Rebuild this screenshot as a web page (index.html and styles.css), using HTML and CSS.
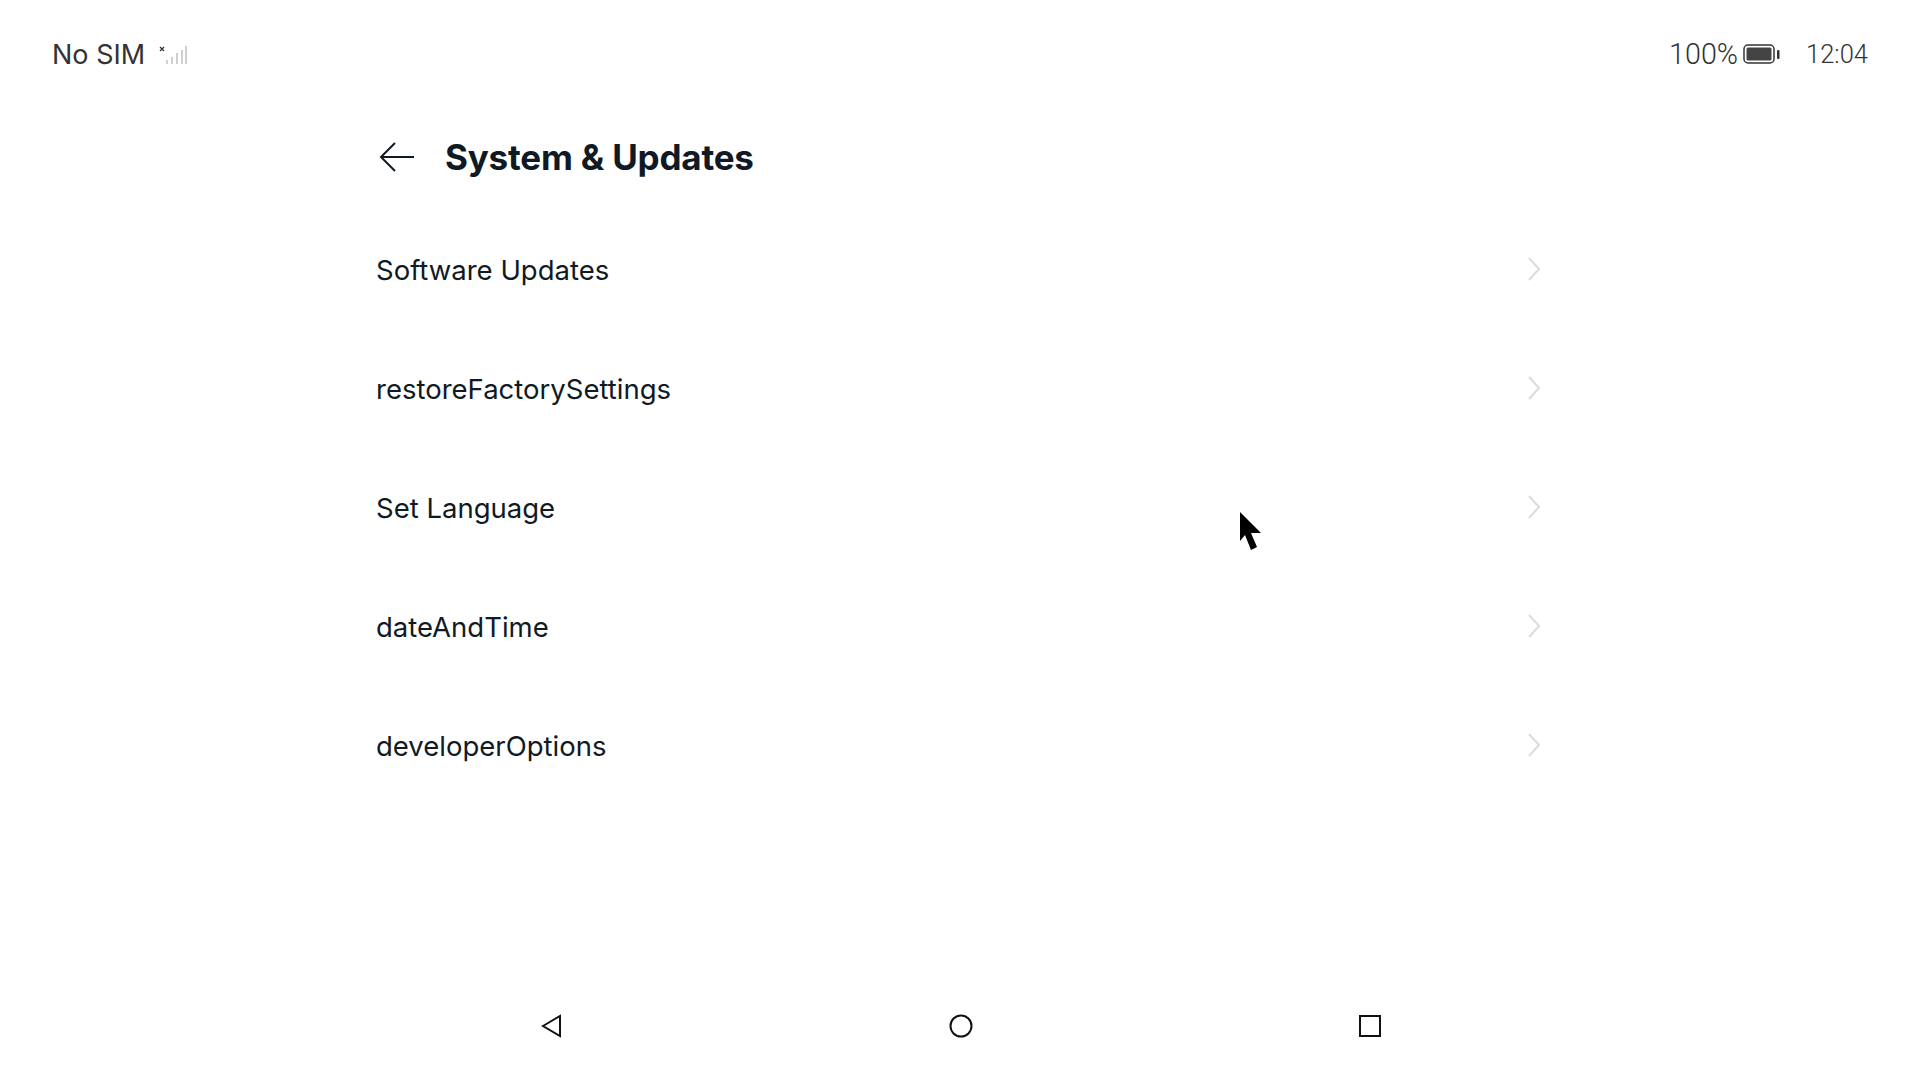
FILE: index.html
```html
<!DOCTYPE html>
<html lang="en">
  <head>
    <meta charset="UTF-8" />
    <title>System &amp; Updates</title>
    <link rel="stylesheet" href="styles.css">
  </head>
  <body>
    <div class="screen">
      <div class="statusBar">
        <div class="statusLeft">
          <span class="noSim">No SIM</span>
          <svg class="signal" width="28" height="20" viewBox="0 0 28 20">
            <path d="M1 3l4 4M5 3l-4 4" stroke="#333" stroke-width="1.3" fill="none" />
            <path d="M8 20v-4M13 20v-7M18 20v-11M23 20v-14M27 20v-18" stroke="#cfcfcf" stroke-width="2" fill="none" />
          </svg>
        </div>
        <div class="statusRight">
          <span class="battery">100%</span>
          <svg class="batteryIcon" width="37" height="20" viewBox="0 0 37 20">
            <rect x="1" y="1" width="30" height="18" rx="4" fill="none" stroke="#333" stroke-width="1.5" />
            <rect x="3.5" y="3.5" width="25" height="13" rx="1.5" fill="#444" />
            <rect x="34" y="6" width="2.5" height="9" rx="1" fill="#333" />
          </svg>
          <span class="clock">12:04</span>
        </div>
      </div>

      <div class="content">
        <div class="header">
          <svg class="backArrow" width="36" height="32" viewBox="0 0 36 32">
            <path d="M35 16H2M16 2L2 16l14 14" fill="none" stroke="#101a24" stroke-width="2" />
          </svg>
          <h1 class="title">System &amp; Updates</h1>
        </div>

        <ul class="menu">
          <li class="menuItem">
            <span class="menuLabel">Software Updates</span>
            <svg class="chevron" width="12" height="24" viewBox="0 0 12 24"><path d="M1 1l10 11L1 23" /></svg>
          </li>
          <li class="menuItem">
            <span class="menuLabel">restoreFactorySettings</span>
            <svg class="chevron" width="12" height="24" viewBox="0 0 12 24"><path d="M1 1l10 11L1 23" /></svg>
          </li>
          <li class="menuItem">
            <span class="menuLabel">Set Language</span>
            <svg class="chevron" width="12" height="24" viewBox="0 0 12 24"><path d="M1 1l10 11L1 23" /></svg>
          </li>
          <li class="menuItem">
            <span class="menuLabel">dateAndTime</span>
            <svg class="chevron" width="12" height="24" viewBox="0 0 12 24"><path d="M1 1l10 11L1 23" /></svg>
          </li>
          <li class="menuItem">
            <span class="menuLabel">developerOptions</span>
            <svg class="chevron" width="12" height="24" viewBox="0 0 12 24"><path d="M1 1l10 11L1 23" /></svg>
          </li>
        </ul>
      </div>

      <div class="navBar">
        <svg width="22" height="24" viewBox="0 0 22 24"><path d="M2 12L19 2v20z" /></svg>
        <svg width="24" height="24" viewBox="0 0 24 24"><circle cx="12" cy="12" r="10.5" /></svg>
        <svg width="24" height="24" viewBox="0 0 24 24"><rect x="2" y="2" width="20" height="20" /></svg>
      </div>

      <!-- mouse pointer -->
      <svg class="cursor" width="24" height="40" viewBox="0 0 24 40">
        <path d="M1 0L22 21H12L18 35L12 38L6 23L1 29Z" fill="#000" />
      </svg>
    </div>
  </body>
</html>
```

FILE: styles.css
```css
* {
  margin: 0;
  padding: 0;
  box-sizing: border-box;
}

body {
  background: #fff;
  font-family: "Inter", "Liberation Sans", sans-serif;
}

.screen {
  position: relative;
  width: 1920px;
  height: 1080px;
  overflow: hidden;
  display: flex;
  flex-direction: column;
}

.statusBar {
  height: 108px;
  padding: 0 52px;
  display: flex;
  justify-content: space-between;
  align-items: center;
  color: #333;
}

.statusLeft,
.statusRight {
  display: flex;
  align-items: center;
}

.noSim {
  font-size: 27px;
}

.signal {
  margin-left: 14px;
  margin-bottom: 1px;
}

.battery,
.clock {
  font-family: "Roboto", sans-serif;
  font-weight: 300;
}

.battery {
  font-size: 28.7px;
}

.batteryIcon {
  margin-left: 5px;
}

.clock {
  margin-left: 26px;
  font-size: 25.5px;
}

.content {
  flex: 1;
  padding-left: 376px;
  padding-right: 380px;
}

.header {
  height: 98px;
  display: flex;
  align-items: center;
}

.backArrow {
  margin-left: 3px;
}

.title {
  margin-left: 30px;
  font-size: 35px;
  font-weight: 700;
  letter-spacing: -0.2px;
  color: #101a24;
}

.menu {
  margin-top: 5px;
  list-style: none;
}

.menuItem {
  height: 119px;
  display: flex;
  justify-content: space-between;
  align-items: center;
  font-size: 27.5px;
  color: #101a24;
}

.menuLabel {
  margin-bottom: 2px;
}

.chevron {
  margin-bottom: 3px;
  fill: none;
  stroke: #dcdcdc;
  stroke-width: 2;
}

.navBar {
  height: 108px;
  padding: 0 538px 0 541px;
  display: flex;
  justify-content: space-between;
  align-items: center;
}

.navBar svg {
  fill: none;
  stroke: #111;
  stroke-width: 2;
}

.cursor {
  position: absolute;
  left: 1239px;
  top: 512px;
}
```
